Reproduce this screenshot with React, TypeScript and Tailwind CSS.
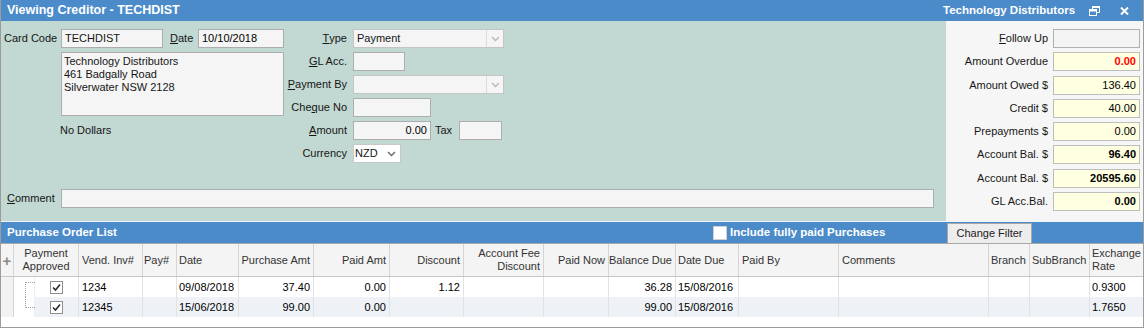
import React from "react";

type Row = {
  vend: string;
  date: string;
  purchase: string;
  paid: string;
  discount: string;
  balance: string;
  dateDue: string;
  rate: string;
};

const rows: Row[] = [
  {
    vend: "1234",
    date: "09/08/2018",
    purchase: "37.40",
    paid: "0.00",
    discount: "1.12",
    balance: "36.28",
    dateDue: "15/08/2016",
    rate: "0.9300",
  },
  {
    vend: "12345",
    date: "15/06/2018",
    purchase: "99.00",
    paid: "0.00",
    discount: "",
    balance: "99.00",
    dateDue: "15/08/2016",
    rate: "1.7650",
  },
];

const cols =
  "grid grid-cols-[13px_65px_64px_34px_62px_75px_76px_74px_80px_65px_67px_63px_100px_150px_41px_60px_53px]";

function Chevron({ color }: { color: string }) {
  return (
    <svg width="9" height="6" viewBox="0 0 9 6">
      <path d="M1 1 L4.5 4.5 L8 1" fill="none" stroke={color} strokeWidth="1.4" />
    </svg>
  );
}

function Input({
  className,
  children,
}: {
  className: string;
  children?: React.ReactNode;
}) {
  return (
    <div
      className={`h-[19px] border border-[#adadad] bg-[#f5f5f5] flex items-center px-[3px] ${className}`}
    >
      {children}
    </div>
  );
}

function Select({ value }: { value: string }) {
  return (
    <div className="h-[19px] w-[151px] border border-[#c4c4c4] bg-[#f5f5f5] flex items-center">
      <span className="flex-1 pl-[3px]">{value}</span>
      <div className="w-[17px] h-full border-l border-[#dcdcdc] flex items-center justify-center">
        <Chevron color="#b8b8b8" />
      </div>
    </div>
  );
}

function Label({ children }: { children: React.ReactNode }) {
  return (
    <div className="h-[19px] w-[63px] flex items-center justify-end whitespace-nowrap">
      {children}
    </div>
  );
}

function SummaryRow({
  label,
  value,
  variant,
}: {
  label: React.ReactNode;
  value?: string;
  variant: "plain" | "gray" | "bold" | "red";
}) {
  const box =
    variant === "gray"
      ? "bg-[#f4f4f4] border-[#b0b0b0]"
      : "bg-[#ffffe1] border-[#bdbdbd]";
  const txt =
    variant === "red"
      ? "font-bold text-[#ff0000]"
      : variant === "bold"
        ? "font-bold text-black"
        : "text-black";
  return (
    <div className="flex items-center justify-end gap-[5px] h-[19px]">
      <span className="whitespace-nowrap">{label}</span>
      <div
        className={`w-[87px] h-[19px] border flex items-center justify-end pr-[3px] ${box} ${txt}`}
      >
        {value}
      </div>
    </div>
  );
}

export default function App() {
  return (
    <div className="w-[1144px] h-[328px] flex flex-col overflow-hidden border-x border-b border-[#9c9c9c] bg-white font-['Liberation_Sans',Arial,sans-serif] text-[11px] leading-[13px] text-[#161616]">
      {/* title bar */}
      <div className="h-[21px] shrink-0 flex items-center bg-[#4b8bca] text-white font-bold">
        <div className="flex-1 pl-[6px] text-[12.5px]">Viewing Creditor - TECHDIST</div>
        <div className="w-[203px] flex items-center text-[11.5px]">
          <span className="pl-[3px]">Technology Distributors</span>
          <svg className="ml-[14px]" width="11" height="10" viewBox="0 0 11 10">
            <path d="M3.5 3 V0.5 H10.5 V6.5 H7.5" fill="none" stroke="white" strokeWidth="1" />
            <path d="M3.5 1 H10.5" stroke="white" strokeWidth="2" />
            <rect x="0.5" y="3.5" width="7" height="6" fill="none" stroke="white" strokeWidth="1" />
            <path d="M0.5 4.5 H7.5" stroke="white" strokeWidth="2" />
          </svg>
          <svg className="ml-[20px]" width="9" height="8" viewBox="0 0 9 8">
            <path d="M1 0.5 L8 7.5 M8 0.5 L1 7.5" stroke="white" strokeWidth="2" />
          </svg>
        </div>
      </div>

      {/* header form */}
      <div className="h-[200px] shrink-0 flex">
        <div className="flex-1 bg-[#c2d8d2] pt-[8px] flex flex-col">
          <div className="flex">
            <div className="w-[283px] flex flex-col">
              <div className="flex items-center h-[19px]">
                <span className="w-[60px] pl-[3px]">Card Code</span>
                <Input className="w-[102px]">TECHDIST</Input>
                <span className="w-[28px] ml-[7px]">
                  <u>D</u>ate
                </span>
                <Input className="w-[86px] text-black">10/10/2018</Input>
              </div>
              <div className="ml-[60px] mt-[4px] w-[223px] h-[64px] border border-[#adadad] bg-[#f5f5f5] pl-[2px] pt-[2px] flex flex-col">
                <span>Technology Distributors</span>
                <span>461 Badgally Road</span>
                <span>Silverwater NSW 2128</span>
              </div>
              <div className="ml-[59px] mt-[8px]">No Dollars</div>
            </div>

            <div className="flex gap-[6px]">
              <div className="flex flex-col gap-[4px]">
                <Label>
                  <u>T</u>ype
                </Label>
                <Label>
                  <u>G</u>L Acc.
                </Label>
                <Label>
                  <u>P</u>ayment By
                </Label>
                <Label>
                  Che<u>q</u>ue No
                </Label>
                <Label>
                  <u>A</u>mount
                </Label>
                <Label>Currency</Label>
              </div>
              <div className="flex flex-col gap-[4px]">
                <Select value="Payment" />
                <Input className="w-[52px]" />
                <Select value="" />
                <Input className="w-[78px]" />
                <div className="flex items-center h-[19px]">
                  <Input className="w-[78px] justify-end text-black">0.00</Input>
                  <span className="w-[28px] pl-[4px]">Tax</span>
                  <Input className="w-[43px]" />
                </div>
                <div className="h-[19px] w-[48px] border border-[#c8c8c8] bg-white flex items-center pl-[1px] pr-[4px] justify-between">
                  <span>NZD</span>
                  <Chevron color="#6a6a6a" />
                </div>
              </div>
            </div>
          </div>

          <div className="flex items-center h-[19px] mt-[26px]">
            <span className="w-[60px] pl-[6px]">
              <u>C</u>omment
            </span>
            <Input className="w-[873px]" />
          </div>
        </div>

        <div className="w-[197px] bg-[#f6f6f6] pt-[8px] pr-[3px] flex flex-col gap-[4.3px]">
          <SummaryRow
            label={
              <>
                <u>F</u>ollow Up
              </>
            }
            variant="gray"
          />
          <SummaryRow label="Amount Overdue" value="0.00" variant="red" />
          <SummaryRow label="Amount Owed $" value="136.40" variant="plain" />
          <SummaryRow label="Credit $" value="40.00" variant="plain" />
          <SummaryRow label="Prepayments $" value="0.00" variant="plain" />
          <SummaryRow label="Account Bal. $" value="96.40" variant="bold" />
          <SummaryRow label="Account Bal. $" value="20595.60" variant="bold" />
          <SummaryRow label="GL Acc.Bal." value="0.00" variant="bold" />
        </div>
      </div>

      <div className="h-[1px] shrink-0 bg-[#eef3f6]" />

      {/* purchase order bar */}
      <div className="h-[21px] shrink-0 flex items-center bg-[#4b8bca] text-white font-bold text-[11.5px]">
        <span className="w-[712px] pl-[6px]">Purchase Order List</span>
        <div className="w-[14px] h-[14px] border border-[#d0d0d0] bg-white" />
        <span className="ml-[3px]">Include fully paid Purchases</span>
        <div className="ml-auto mr-[111px] self-end w-[85px] h-[20px] border border-b-0 border-[#a9a9a9] bg-[#ededed] text-[#222] font-normal text-[11px] flex items-center justify-center">
          Change Filter
        </div>
      </div>

      {/* grid */}
      <div className="flex-1 border-t border-[#a7a7a7] flex flex-col">
        <div className={`${cols} h-[33px] bg-[#f4f4f4] border-b border-[#c6c6c6] text-[#333]`}>
          <div className="border-r border-[#d4d4d4] flex items-center justify-center text-[#8a8a8a] text-[15px] font-bold">
            +
          </div>
          <div className="border-r border-[#d4d4d4] flex items-center justify-center text-center">
            Payment
            <br />
            Approved
          </div>
          <div className="border-r border-[#d4d4d4] flex items-center pl-[3px]">Vend. Inv#</div>
          <div className="border-r border-[#d4d4d4] flex items-center pl-[1px]">Pay#</div>
          <div className="border-r border-[#d4d4d4] flex items-center pl-[2px]">Date</div>
          <div className="border-r border-[#d4d4d4] flex items-center justify-end pr-[3px]">Purchase Amt</div>
          <div className="border-r border-[#d4d4d4] flex items-center justify-end pr-[3px]">Paid Amt</div>
          <div className="border-r border-[#d4d4d4] flex items-center justify-end pr-[3px]">Discount</div>
          <div className="border-r border-[#d4d4d4] flex items-center justify-end pr-[3px] text-right">
            Account Fee
            <br />
            Discount
          </div>
          <div className="border-r border-[#d4d4d4] flex items-center justify-end pr-[3px]">Paid Now</div>
          <div className="border-r border-[#d4d4d4] flex items-center justify-end pr-[3px]">Balance Due</div>
          <div className="border-r border-[#d4d4d4] flex items-center pl-[2px]">Date Due</div>
          <div className="border-r border-[#d4d4d4] flex items-center pl-[3px]">Paid By</div>
          <div className="border-r border-[#d4d4d4] flex items-center pl-[3px]">Comments</div>
          <div className="border-r border-[#d4d4d4] flex items-center pl-[2px]">Branch</div>
          <div className="border-r border-[#d4d4d4] flex items-center pl-[2px]">SubBranch</div>
          <div className="flex items-center pl-[2px]">
            Exchange
            <br />
            Rate
          </div>
        </div>

        {rows.map((r, i) => {
          const bg = i % 2 === 0 ? "bg-white" : "bg-[#eef2f7]";
          const cell = "border-r border-[#e2e2e2] flex items-center";
          return (
            <div key={`po-row-${i}`} className={`${cols} h-[20px] text-black`}>
              <div className="border-r border-[#d4d4d4] bg-[#f2f2f2]" />
              <div className={`border-r border-[#e2e2e2] flex items-center ${bg}`}>
                <div className="relative w-[21px] h-full bg-white border-r border-[#efefef]">
                  {i === 0 ? (
                    <div className="absolute left-[11px] top-[5px] bottom-0 w-[10px] border-l border-t border-dotted border-[#a0a0a0]" />
                  ) : (
                    <div className="absolute left-[11px] top-0 bottom-[9px] w-[10px] border-l border-b border-dotted border-[#a0a0a0]" />
                  )}
                </div>
                <div className="ml-[15px] w-[13px] h-[13px] border border-[#8e8e8e] bg-white flex items-center justify-center">
                  <svg width="11" height="11" viewBox="0 0 11 11">
                    <path d="M2 5.5 L4.5 8 L9 2.5" fill="none" stroke="#2b2b2b" strokeWidth="1.6" />
                  </svg>
                </div>
              </div>
              <div className={`${cell} ${bg} pl-[3px]`}>{r.vend}</div>
              <div className={`${cell} ${bg}`} />
              <div className={`${cell} ${bg} pl-[2px]`}>{r.date}</div>
              <div className={`${cell} ${bg} justify-end pr-[3px]`}>{r.purchase}</div>
              <div className={`${cell} ${bg} justify-end pr-[3px]`}>{r.paid}</div>
              <div className={`${cell} ${bg} justify-end pr-[3px]`}>{r.discount}</div>
              <div className={`${cell} ${bg}`} />
              <div className={`${cell} ${bg}`} />
              <div className={`${cell} ${bg} justify-end pr-[3px]`}>{r.balance}</div>
              <div className={`${cell} ${bg} pl-[2px]`}>{r.dateDue}</div>
              <div className={`${cell} ${bg}`} />
              <div className={`${cell} ${bg}`} />
              <div className={`${cell} ${bg}`} />
              <div className={`${cell} ${bg}`} />
              <div className={`flex items-center ${bg} pl-[2px]`}>{r.rate}</div>
            </div>
          );
        })}
      </div>
    </div>
  );
}
